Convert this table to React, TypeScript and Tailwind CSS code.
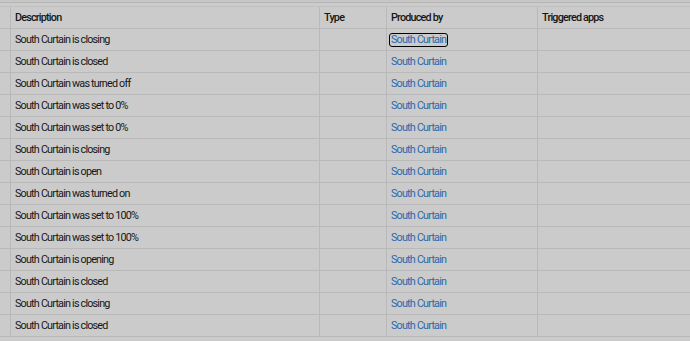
const rows = [
  "South Curtain is closing",
  "South Curtain is closed",
  "South Curtain was turned off",
  "South Curtain was set to 0%",
  "South Curtain was set to 0%",
  "South Curtain is closing",
  "South Curtain is open",
  "South Curtain was turned on",
  "South Curtain was set to 100%",
  "South Curtain was set to 100%",
  "South Curtain is opening",
  "South Curtain is closed",
  "South Curtain is closing",
  "South Curtain is closed",
];

const cols = "grid grid-cols-[10px_309px_67px_151px_1fr]";
const cell = "border-l border-[#b9b9b9] px-[4px] pt-[2px] flex items-center";

export default function App() {
  return (
    <div className="w-[690px] h-[341px] overflow-hidden bg-[#cbcbcb] text-[10.8px] tracking-[-0.8px] text-[#161616] font-['Roboto',sans-serif]">
      <div className="h-[2px] bg-[#c6c6c6]" />
      <div className="h-[5px] border-t border-[#b5b5b5] border-b border-b-[#c0c0c0]" />

      {/* header */}
      <div className={`${cols} h-[22px] border-b border-[#b9b9b9] font-medium`}>
        <div />
        <div className={cell}>Description</div>
        <div className={cell}>Type</div>
        <div className={cell}>Produced by</div>
        <div className={cell}>Triggered apps</div>
      </div>

      {rows.map((desc, i) => (
        <div key={i} className={`${cols} h-[22px] border-b border-[#b9b9b9]`}>
          <div />
          <div className={cell}>{desc}</div>
          <div className={cell} />
          <div className={cell}>
            <a
              href="#"
              className={`inline-block leading-[12px] -mt-[2px] text-[#2a68ab] ${
                i === 0 ? "outline outline-1 outline-black rounded-[2px] -mx-[1px] px-[1px]" : ""
              }`}
            >
              South Curtain
            </a>
          </div>
          <div className={cell} />
        </div>
      ))}
    </div>
  );
}
